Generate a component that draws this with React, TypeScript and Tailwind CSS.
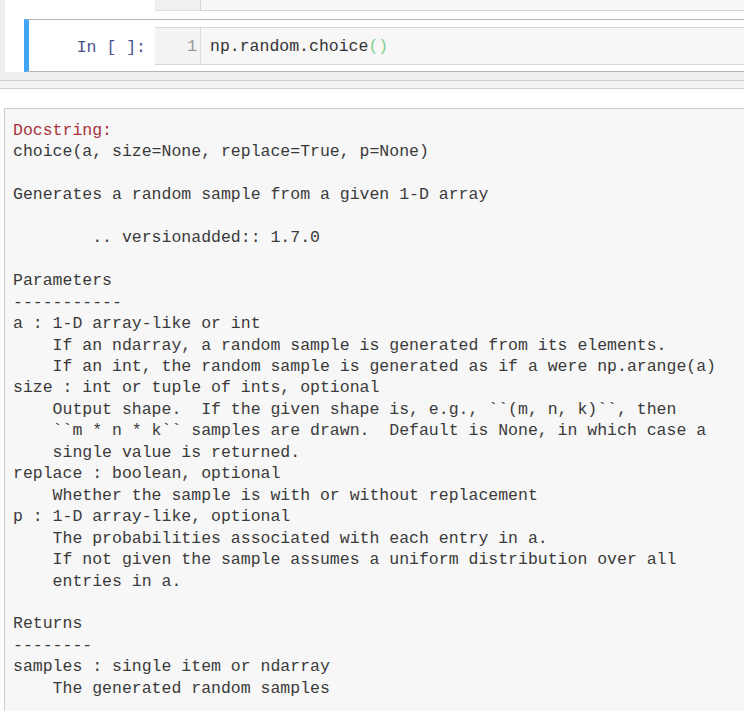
import React from "react";

const mono = "font-['Liberation_Mono','DejaVu_Sans_Mono',monospace]";

const doc: string[] = [
  "choice(a, size=None, replace=True, p=None)",
  "",
  "Generates a random sample from a given 1-D array",
  "",
  "        .. versionadded:: 1.7.0",
  "",
  "Parameters",
  "-----------",
  "a : 1-D array-like or int",
  "    If an ndarray, a random sample is generated from its elements.",
  "    If an int, the random sample is generated as if a were np.arange(a)",
  "size : int or tuple of ints, optional",
  "    Output shape.  If the given shape is, e.g., ``(m, n, k)``, then",
  "    ``m * n * k`` samples are drawn.  Default is None, in which case a",
  "    single value is returned.",
  "replace : boolean, optional",
  "    Whether the sample is with or without replacement",
  "p : 1-D array-like, optional",
  "    The probabilities associated with each entry in a.",
  "    If not given the sample assumes a uniform distribution over all",
  "    entries in a.",
  "",
  "Returns",
  "--------",
  "samples : single item or ndarray",
  "    The generated random samples",
];

const App = () => {
  return (
    <div className="w-[744px] h-[722px] bg-white overflow-hidden">
      {/* notebook area */}
      <div className="bg-[#eeeeee] h-[80px] pl-[5px]">
        <div className="bg-white h-[72px]">
          {/* tail of previous cell */}
          <div className="flex h-[11px]">
            <div className="w-[150px]" />
            <div className="w-[45px] bg-[#f0f0f0] border-b border-[#dcdcdc]" />
            <div className="flex-1 bg-[#f7f7f7] border-l border-b border-[#d4d4d4]" />
          </div>

          {/* current cell */}
          <div className="ml-[19px] mt-[8px] h-[53px] flex border-y border-[#b5b5b5] border-l-[5px] border-l-[#42a5f5]">
            <div className={`w-[126px] pr-[9px] pt-[5px] flex items-center justify-end text-[16.5px] text-[#4b5190] ${mono}`}>
              In [ ]:
            </div>
            <div className="flex-1 mt-[7px] h-[38px] flex border-y border-[#d6d6d6] bg-[#f7f7f7]">
              <div className={`w-[45px] pr-[3px] pt-[3px] flex items-center justify-end text-[16.5px] text-[#999999] bg-[#f3f3f3] ${mono}`}>
                1
              </div>
              <div className={`flex-1 pl-[9px] pt-[3px] flex items-center border-l border-[#dddddd] text-[16.5px] text-[#333333] ${mono}`}>
                np.random.choice<span className="text-[#7fd08a]">()</span>
              </div>
            </div>
          </div>
        </div>
      </div>

      {/* pager divider */}
      <div className="h-[9px] border-t border-b border-[#cfcfcf] bg-[#f2f2f2]" />

      {/* pager */}
      <div className="mt-[19px] ml-[4px] h-[603px] bg-[#f7f7f7] border-t border-l border-[#cccccc] pt-[11px] pl-[8px]">
        <pre className={`text-[16.5px] leading-[21.45px] text-[#3a3a3a] ${mono}`}>
          <span className="text-[#a8313a]">Docstring:</span>
          {"\n"}
          {doc.join("\n")}
        </pre>
      </div>
    </div>
  );
};

export default App;
